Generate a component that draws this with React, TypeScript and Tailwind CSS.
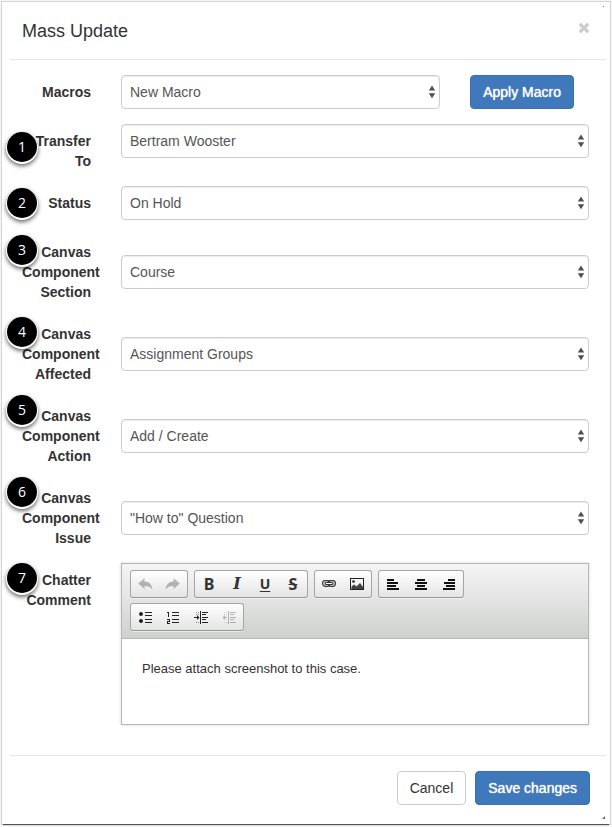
import { useState } from "react";
import type { ReactNode } from "react";
import clsx from "clsx";

interface Field {
    id: string;
    label: string;
    marker: number;
    markerClass: string;
    tall?: boolean;
    options: string[];
}

const fields: Field[] = [
    { id: "transfer", label: "Transfer To", marker: 1, markerClass: "top-2", options: ["Bertram Wooster"] },
    { id: "status", label: "Status", marker: 2, markerClass: "top-0.5", options: ["On Hold", "Open", "Closed"] },
    { id: "section", label: "Canvas Component Section", marker: 3, markerClass: "top-0", tall: true, options: ["Course", "Account"] },
    { id: "affected", label: "Canvas Component Affected", marker: 4, markerClass: "top-0", tall: true, options: ["Assignment Groups", "Assignments"] },
    { id: "action", label: "Canvas Component Action", marker: 5, markerClass: "-top-1", tall: true, options: ["Add / Create", "Delete"] },
    { id: "issue", label: "Canvas Component Issue", marker: 6, markerClass: "-top-1", tall: true, options: ['"How to" Question', "Bug"] },
];

const Marker = ({ value, className }: { value: number; className: string }) => (
    <span
        className={clsx(
            "absolute -left-[15px] flex size-[30px] items-center justify-center rounded-full bg-black font-['Open_Sans',sans-serif] text-[14px] text-white shadow-[0_1px_0_1px_#fff,0_3px_4px_1px_rgba(0,0,0,0.6)]",
            className
        )}
    >
        {value}
    </span>
);

const SelectBox = ({ id, options }: { id: string; options: string[] }) => (
    <div className="relative min-w-0 flex-1">
        <select
            id={id}
            className="block h-[34px] w-full appearance-none rounded border border-[#ccc] bg-white px-2 text-[14px] leading-5 text-[#555] shadow-[inset_0_1px_1px_rgba(0,0,0,0.075)]"
        >
            {options.map((option) => (
                <option key={option}>{option}</option>
            ))}
        </select>
        <svg className="pointer-events-none absolute top-[10px] right-1 h-[14px] w-2" viewBox="0 0 8 14" fill="#4f4f4f">
            <path d="M4 .5 7.2 5.5H.8zM4 13.3 7.2 8.3H.8z" />
        </svg>
    </div>
);

const labelClass = "w-[69px] shrink-0 pt-[7px] text-right font-bold";
const primaryClass =
    "h-[34px] rounded border border-[#3a70ab] bg-[#4079bb] px-3 text-[14px] text-white [text-shadow:0_0_1px_#fff]";

const ToolGroup = ({ children }: { children: ReactNode }) => (
    <div className="flex h-7 rounded-[3px] border border-[#a6a6a6] border-b-[#979797] bg-linear-to-b from-white to-[#e4e4e4] shadow-[0_1px_0_rgba(255,255,255,0.5)]">
        {children}
    </div>
);

const Tool = ({ name, disabled, children }: { name: string; disabled?: boolean; children: ReactNode }) => (
    <button
        type="button"
        aria-label={name}
        title={name}
        disabled={disabled}
        className="flex h-[26px] w-7 items-center justify-center disabled:opacity-30"
    >
        <svg width="16" height="16" viewBox="0 0 16 16" fill="#222">
            {children}
        </svg>
    </button>
);

const LetterTool = ({ name, letter, className }: { name: string; letter: string; className: string }) => (
    <button
        type="button"
        aria-label={name}
        title={name}
        className={clsx("flex h-[26px] w-7 items-center justify-center font-bold text-[#333]", className)}
    >
        {letter}
    </button>
);

const undoPath = "M1.2 7.5 7.5 2.2v3.2c4.3 0 7.4 2.8 7.8 8-1.7-2.6-4.2-3.6-7.8-3.5v3z";
const dots = "M3 3h1v1H3zM5 3h1v1H5zM3 13h1v1H3zM5 13h1v1H5zM3 5h1v1H3zM5 5h1v1H5z";
const indentLines = "M7 2h1v13H7zM9 3h6v1H9zM9 5h4v1H9zM9 8h6v1H9zM9 10h4v1H9zM9 13h6v1H9z";

const Toolbar = () => (
    <div className="flex flex-wrap gap-x-[6px] gap-y-[5px] border-b border-[#b6b6b6] bg-linear-to-b from-[#f5f5f5] to-[#cfd1cf] px-2 pt-[6px] pb-[7px]">
        <ToolGroup>
            <Tool name="Undo" disabled>
                <path d={undoPath} />
            </Tool>
            <Tool name="Redo" disabled>
                <path d={undoPath} transform="matrix(-1 0 0 1 16 0)" />
            </Tool>
        </ToolGroup>
        <ToolGroup>
            <LetterTool name="Bold" letter="B" className="font-['Noto_Sans',sans-serif] text-[16px]" />
            <LetterTool name="Italic" letter="I" className="font-['DejaVu_Serif',serif] text-[16px] italic" />
            <LetterTool
                name="Underline"
                letter="U"
                className="font-['Noto_Sans',sans-serif] text-[14px] underline decoration-1 underline-offset-2"
            />
            <LetterTool name="Strikethrough" letter="S" className="font-['Noto_Sans',sans-serif] text-[16px] line-through decoration-1" />
        </ToolGroup>
        <ToolGroup>
            <Tool name="Link">
                <g fill="none" stroke="#333" strokeWidth="1.2">
                    <rect x="1.6" y="4.6" width="7.3" height="5.8" rx="2.8" />
                    <rect x="7.1" y="4.6" width="7.3" height="5.8" rx="2.8" />
                    <rect x="4" y="6.5" width="8" height="2" rx="1" fill="#fff" />
                </g>
            </Tool>
            <Tool name="Image">
                <path fillRule="evenodd" d="M1 2h14v12H1zM2 3v10h12V3z" />
                <circle cx="4.5" cy="5.5" r="1.3" />
                <path d="M2.5 13v-2.500L5 8.500 7.500 10.500 11 7l3 4v2z" fill="#444" />
            </Tool>
        </ToolGroup>
        <ToolGroup>
            <Tool name="Align left">
                <path d="M2 3h7v2H2zM2 6h11v2H2zM2 9h9v2H2zM2 12h12v2H2z" fill="#111" />
            </Tool>
            <Tool name="Center">
                <path d="M4 3h8v2H4zM2 6h12v2H2zM4 9h8v2H4zM2 12h12v2H2z" fill="#111" />
            </Tool>
            <Tool name="Align right">
                <path d="M7 3h7v2H7zM3 6h11v2H3zM5 9h9v2H5zM2 12h12v2H2z" fill="#111" />
            </Tool>
        </ToolGroup>
        <ToolGroup>
            <Tool name="Bulleted list">
                <circle cx="4" cy="5" r="2" />
                <circle cx="4" cy="12" r="2" />
                <path d="M8 3h7v1H8zM8 6h7v1H8zM8 10h7v1H8zM8 13h7v1H8z" />
            </Tool>
            <Tool name="Numbered list">
                <path d="M2 3h2v5H3V4H2zM2 10h3v3H3v1h2v1H2v-3h2v-1H2z" />
                <path d="M7 3h7v1H7zM7 6h7v1H7zM7 10h7v1H7zM7 13h7v1H7z" />
            </Tool>
            <Tool name="Increase indent">
                <path d={dots} fillOpacity=".5" />
                <path d={indentLines} />
                <path d="M1 8h3V6l2.500 2.500L4 11V9H1z" />
            </Tool>
            <Tool name="Decrease indent" disabled>
                <path d={dots} fillOpacity=".5" />
                <path d={indentLines} />
                <path d="M6 8H4V6L1.500 8.500 4 11V9h2z" />
            </Tool>
        </ToolGroup>
    </div>
);

const App = () => {
    const [comment, setComment] = useState("Please attach screenshot to this case.");

    return (
        <div className="bg-[#fafafa] px-0.5 pt-0.5 pb-[3px] font-['Liberation_Sans',Arial,sans-serif] text-[14px] leading-5 text-[#333]">
            <div role="dialog" aria-labelledby="dialog-title" className="relative bg-white pr-1 pl-2 shadow-[0_0_1px_1px_rgba(0,0,0,0.15),0_2px_1px_-1px_rgba(0,0,0,0.6)]">
                <header className="flex items-start justify-between border-b border-[#e5e5e5] pt-4 pr-4 pb-[15px] pl-3">
                    <h4 id="dialog-title" className="text-[18px] leading-[26px]">Mass Update</h4>
                    <button type="button" aria-label="Close" className="pt-1">
                        <svg width="12" height="12" viewBox="0 0 12 12" stroke="#ccc" strokeWidth="3.2">
                            <path d="M1.8 1.8 10.200 10.200M10.200 1.800 1.800 10.200" />
                        </svg>
                    </button>
                </header>

                <form id="mass-update" className="flex flex-col gap-[15px] py-[15px] pr-[17px] pl-3">
                    <div className="flex gap-[30px]">
                        <label htmlFor="macros" className={labelClass}>Macros</label>
                        <div className="flex flex-1 gap-[30px] pr-[15px]">
                            <SelectBox id="macros" options={["New Macro"]} />
                            <button type="button" className={primaryClass}>Apply Macro</button>
                        </div>
                    </div>

                    {fields.map((field) => (
                        <div key={field.id} className="relative flex gap-[30px]">
                            <label htmlFor={field.id} className={labelClass}>{field.label}</label>
                            <div className={clsx("flex flex-1 items-start", field.tall && "pt-5")}>
                                <SelectBox id={field.id} options={field.options} />
                            </div>
                            <Marker value={field.marker} className={field.markerClass} />
                        </div>
                    ))}

                    <div className="relative flex gap-[30px] pb-[15px]">
                        <label htmlFor="comment" className={labelClass}>Chatter Comment</label>
                        <div className="min-w-0 flex-1 border border-[#b6b6b6] shadow-[0_0_3px_rgba(0,0,0,0.15)]">
                            <Toolbar />
                            <textarea
                                id="comment"
                                value={comment}
                                onChange={(e) => setComment(e.target.value)}
                                className="block h-[85px] w-full resize-none overflow-auto bg-white p-5 text-[13px] leading-5 text-[#333]"
                            />
                        </div>
                        <Marker value={7} className="top-0" />
                    </div>
                </form>

                <footer className="flex justify-end gap-[9px] border-t border-[#e5e5e5] pt-[15px] pr-4 pb-[19px]">
                    <button type="button" className="h-[34px] rounded border border-[#ccc] bg-white px-3">Cancel</button>
                    <button type="submit" form="mass-update" className={primaryClass}>Save changes</button>
                </footer>

                {/* corner grips */}
                <svg className="absolute top-1 right-1 size-1" viewBox="0 0 4 4">
                    <path d="M1 0h1v1H1z" fill="#777" />
                </svg>
                <svg className="absolute right-1 bottom-1 size-1" viewBox="0 0 4 4">
                    <path d="M3 0v3H0z" fill="#666" />
                </svg>
            </div>
        </div>
    );
};

export default App;
